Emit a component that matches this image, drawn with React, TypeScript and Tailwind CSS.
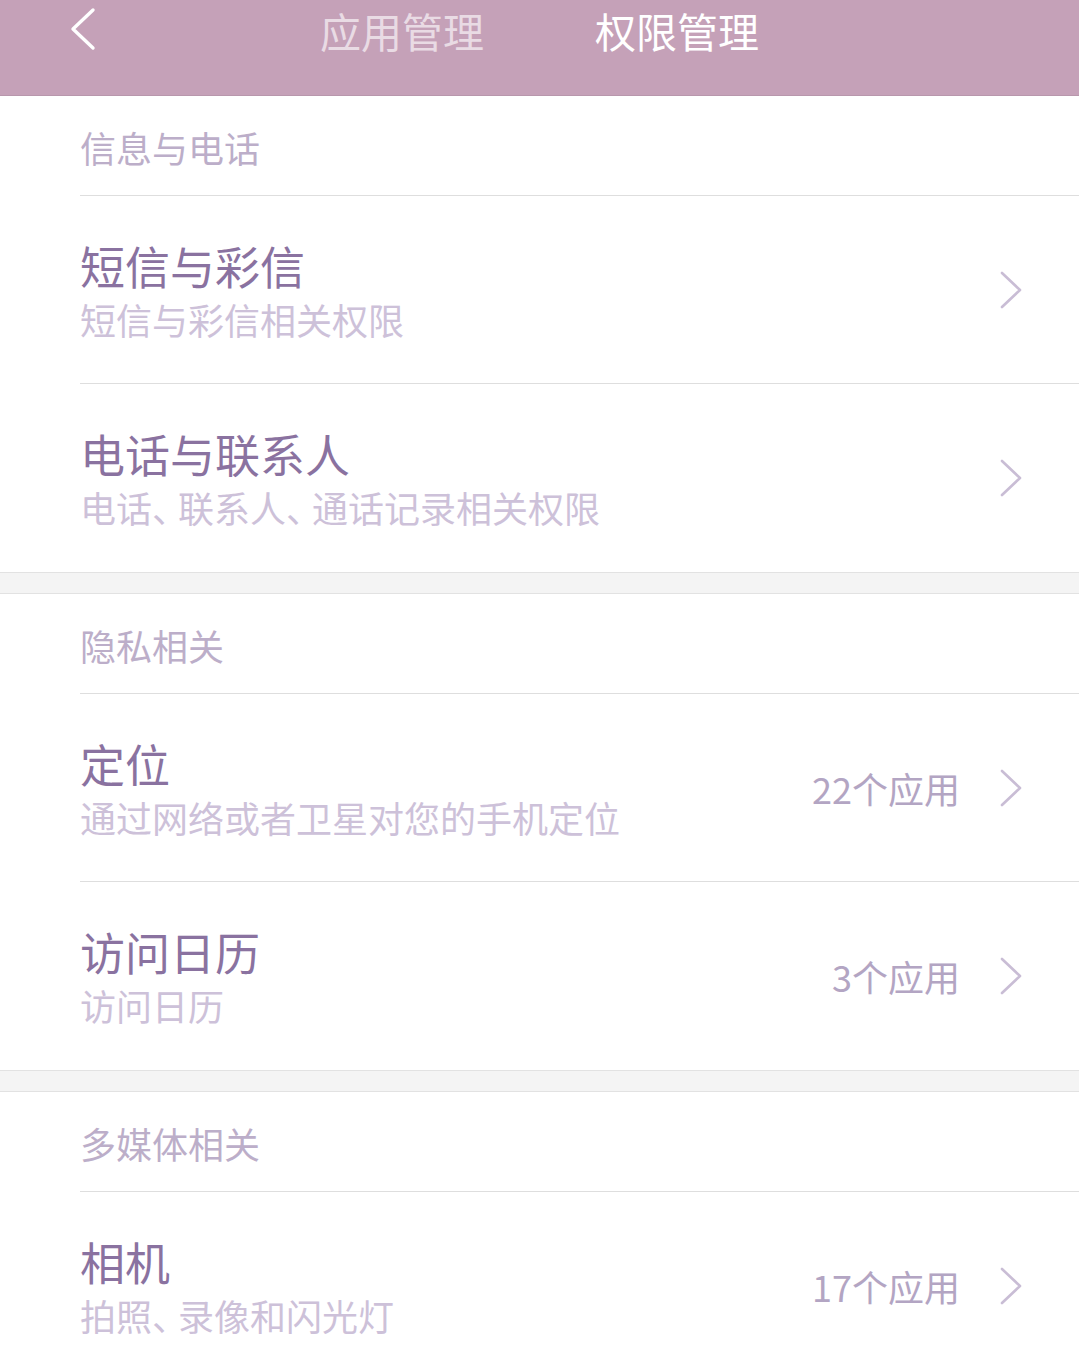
import React from "react";

const FONT = { fontFamily: '"Noto Sans CJK SC", "Noto Sans", sans-serif' };

function Chevron() {
  return (
    <svg width="22" height="38" viewBox="0 0 22 38" className="shrink-0">
      <polyline
        points="2,2 20,19 2,36"
        fill="none"
        stroke="#c9bdd5"
        strokeWidth="2.6"
        strokeLinecap="round"
        strokeLinejoin="round"
      />
    </svg>
  );
}

function SectionHeader({ title }: { title: string }) {
  return (
    <div className="h-[100px] bg-white pl-[80px]">
      <div className="flex h-full items-center border-b border-[#dedede] pt-[2px]">
        <span className="text-[36px] leading-none text-[#bcaec9]">{title}</span>
      </div>
    </div>
  );
}

function Sub({ text }: { text: string }) {
  const parts = text.split("、");
  return (
    <>
      {parts.map((p, i) => (
        <React.Fragment key={i}>
          {p}
          {i < parts.length - 1 && <span className="tracking-[-10px]">、</span>}
        </React.Fragment>
      ))}
    </>
  );
}

function Row({
  title,
  sub,
  count,
  last,
}: {
  title: string;
  sub: string;
  count?: string;
  last?: boolean;
}) {
  return (
    <div className="h-[188px] bg-white pl-[80px]">
      <div
        className={
          "flex h-full items-center pr-[57px] " +
          (last ? "" : "border-b border-[#dedede]")
        }
      >
        <div className="flex flex-1 flex-col">
          <span className="text-[45px] leading-[54px] text-[#8a72a0]">{title}</span>
          <span className="mt-[4px] whitespace-nowrap text-[36px] leading-[44px] text-[#cdc1d9]">
            <Sub text={sub} />
          </span>
        </div>
        {count && (
          <span className="mr-[40px] text-[36px] leading-none text-[#b3a5c3]">{count}</span>
        )}
        <Chevron />
      </div>
    </div>
  );
}

function Band() {
  return <div className="h-[22px] border-y border-[#e2e2e2] bg-[#f4f4f4]" />;
}

export default function App() {
  return (
    <div className="min-h-[1370px] w-full overflow-hidden bg-white" style={FONT}>
      <div className="flex h-[96px] items-start border-b border-[#b897ac] bg-[#c5a1b8]">
        <div className="ml-[68px] mt-[7px]">
          <svg width="30" height="44" viewBox="0 0 30 44">
            <polyline
              points="25,3 5,22 25,41"
              fill="none"
              stroke="#ffffff"
              strokeWidth="3.4"
              strokeLinecap="round"
              strokeLinejoin="round"
            />
          </svg>
        </div>
        <span className="ml-[222px] whitespace-nowrap text-[41px] leading-[60px] text-[#e9dbe4]">
          应用管理
        </span>
        <span className="ml-[111px] whitespace-nowrap text-[41px] leading-[60px] text-white">
          权限管理
        </span>
      </div>

      <SectionHeader title="信息与电话" />
      <Row title="短信与彩信" sub="短信与彩信相关权限" />
      <Row title="电话与联系人" sub="电话、联系人、通话记录相关权限" last />
      <Band />

      <SectionHeader title="隐私相关" />
      <Row title="定位" sub="通过网络或者卫星对您的手机定位" count="22个应用" />
      <Row title="访问日历" sub="访问日历" count="3个应用" last />
      <Band />

      <SectionHeader title="多媒体相关" />
      <Row title="相机" sub="拍照、录像和闪光灯" count="17个应用" />
    </div>
  );
}
